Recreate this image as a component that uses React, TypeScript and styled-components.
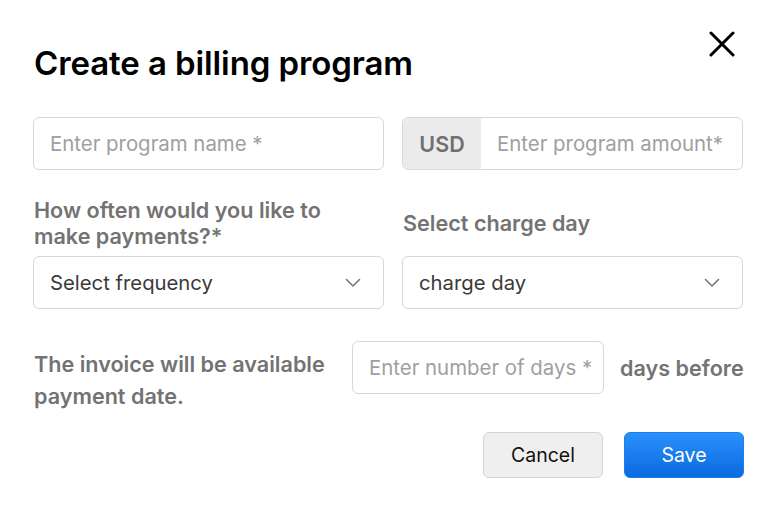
import styled, { createGlobalStyle } from "styled-components";

const GlobalStyle = createGlobalStyle`
  body {
    margin: 0;
    background: #ffffff;
    font-family: Inter, "Noto Sans", sans-serif;
  }
  * { box-sizing: border-box; }
`;

const Dialog = styled.div`
  width: 770px;
  height: 517px;
  padding: 26px 26px 0 33px;
  background: #fff;
`;

const Header = styled.div`
  display: flex;
  justify-content: space-between;
  align-items: flex-start;
  height: 91px;
`;

const Title = styled.h1`
  margin: 17px 0 0 1px;
  font-size: 33px;
  font-weight: 600;
  color: #000;
  letter-spacing: -0.1px;
`;

const CloseButton = styled.button`
  border: none;
  background: none;
  padding: 0;
  margin: 5px 9px 0 0;
  width: 26px;
  height: 26px;
  cursor: pointer;
`;

const Row = styled.div`
  display: grid;
  grid-template-columns: 351px 341px;
  column-gap: 18px;
  align-items: center;
`;

const Field = styled.div`
  height: 53px;
  border: 1px solid #d8d8d8;
  border-radius: 6px;
  display: flex;
  align-items: center;
  overflow: hidden;
  background: #fff;
`;

const Placeholder = styled.span`
  padding-left: 16px;
  font-size: 20.4px;
  color: #a0a0a0;
  flex: 1;
  white-space: nowrap;
`;

const Value = styled.span`
  padding-left: 16px;
  font-size: 20.3px;
  color: #3a3a3a;
  flex: 1;
`;

const Addon = styled.span`
  width: 78px;
  height: 100%;
  background: #ebebeb;
  display: flex;
  align-items: center;
  justify-content: center;
  font-size: 21.5px;
  font-weight: 600;
  color: #707070;
`;

const Label = styled.div`
  font-size: 21.6px;
  font-weight: 600;
  color: #737373;
  line-height: 26px;
  padding-left: 1px;
  white-space: nowrap;
`;

const LabelRow = styled(Row)`
  margin-top: 27px;
  margin-bottom: 7px;
`;

const Chevron = styled.svg`
  margin-right: 22px;
`;

const InvoiceRow = styled.div`
  display: flex;
  align-items: flex-start;
  margin-top: 32px;
`;

const InvoiceLabel = styled(Label)`
  width: 319px;
  line-height: 32px;
  margin-top: 7px;
`;

const DaysField = styled(Field)`
  width: 252px;
`;

const Suffix = styled(Label)`
  margin-left: 15px;
  margin-top: 14px;
`;

const Actions = styled.div`
  display: flex;
  justify-content: flex-end;
  gap: 21px;
  margin-top: 20px;
`;

const Button = styled.button<{ $primary?: boolean }>`
  width: 120px;
  height: 46px;
  border-radius: 6px;
  font-family: Inter, "Noto Sans", sans-serif;
  font-size: 19.5px;
  cursor: pointer;
  border: 1px solid ${(p) => (p.$primary ? "#1a7ff0" : "#d4d4d4")};
  background: ${(p) => (p.$primary ? "linear-gradient(#2b90fa, #0a6ae0)" : "#efefef")};
  color: ${(p) => (p.$primary ? "#fff" : "#111")};
`;

function ChevronDown() {
  return (
    <Chevron width="16" height="10" viewBox="0 0 16 10" fill="none">
      <path d="M1.5 1.5L8 8L14.5 1.5" stroke="#777" strokeWidth="1.6" strokeLinecap="round" strokeLinejoin="round" />
    </Chevron>
  );
}

export default function App() {
  return (
    <Dialog>
      <GlobalStyle />
      <Header>
        <Title>Create a billing program</Title>
        <CloseButton aria-label="Close">
          <svg width="26" height="26" viewBox="0 0 26 26">
            <path d="M2 2L24 24M24 2L2 24" stroke="#000" strokeWidth="3" strokeLinecap="round" />
          </svg>
        </CloseButton>
      </Header>
      <Row>
        <Field>
          <Placeholder>Enter program name *</Placeholder>
        </Field>
        <Field>
          <Addon>USD</Addon>
          <Placeholder>Enter program amount*</Placeholder>
        </Field>
      </Row>
      <LabelRow>
        <Label>
          How often would you like to
          <br />
          make payments?*
        </Label>
        <Label>Select charge day</Label>
      </LabelRow>
      <Row>
        <Field>
          <Value>Select frequency</Value>
          <ChevronDown />
        </Field>
        <Field>
          <Value>charge day</Value>
          <ChevronDown />
        </Field>
      </Row>
      <InvoiceRow>
        <InvoiceLabel>
          The invoice will be available
          <br />
          payment date.
        </InvoiceLabel>
        <DaysField>
          <Placeholder>Enter number of days *</Placeholder>
        </DaysField>
        <Suffix>days before</Suffix>
      </InvoiceRow>
      <Actions>
        <Button>Cancel</Button>
        <Button $primary>Save</Button>
      </Actions>
    </Dialog>
  );
}
